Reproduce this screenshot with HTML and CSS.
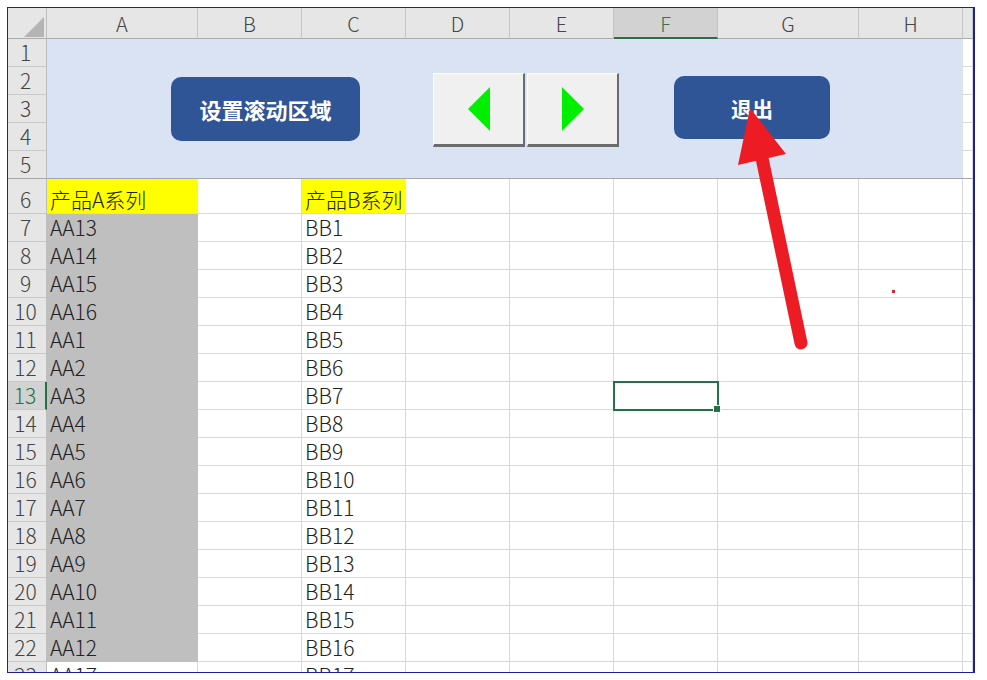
FILE: index.html
```html
<!DOCTYPE html>
<html lang="zh-CN">
<head>
  <meta charset="UTF-8" />
  <title>设置滚动区域</title>
  <link rel="stylesheet" href="styles.css">
</head>
<body>
  <div class="frame">
    <div class="sheet">
      <div class="corner"><span class="tri"></span></div>
      <div class="ch">A</div><div class="ch">B</div><div class="ch">C</div><div class="ch">D</div>
      <div class="ch">E</div><div class="ch on">F</div><div class="ch">G</div><div class="ch">H</div><div class="ch"></div>

      <div class="band">
        <div class="shape blue set">设置滚动区域</div>
        <div class="nav">
          <div class="navbtn">
            <svg width="22" height="44" viewBox="0 0 22 44"><polygon points="0,22 22,0 22,44" fill="#00ee00"/></svg>
          </div>
          <div class="navbtn">
            <svg width="22" height="44" viewBox="0 0 22 44"><polygon points="0,0 22,22 0,44" fill="#00ee00"/></svg>
          </div>
        </div>
        <div class="shape blue exit">退出</div>
      </div>

      <div class="rh">1</div><div class="c"></div>
      <div class="rh">2</div><div class="c"></div>
      <div class="rh">3</div><div class="c"></div>
      <div class="rh">4</div><div class="c"></div>
      <div class="rh last">5</div><div class="c last"></div>

      <div class="rh tall">6</div><div class="c tall y">产品A系列</div><div class="c tall"></div><div class="c tall y">产品B系列</div><div class="c"></div><div class="c"></div><div class="c"></div><div class="c"></div><div class="c"></div><div class="c"></div>
      <div class="rh">7</div><div class="c g">AA13</div><div class="c"></div><div class="c">BB1</div><div class="c"></div><div class="c"></div><div class="c"></div><div class="c"></div><div class="c"></div><div class="c"></div>
      <div class="rh">8</div><div class="c g">AA14</div><div class="c"></div><div class="c">BB2</div><div class="c"></div><div class="c"></div><div class="c"></div><div class="c"></div><div class="c"></div><div class="c"></div>
      <div class="rh">9</div><div class="c g">AA15</div><div class="c"></div><div class="c">BB3</div><div class="c"></div><div class="c"></div><div class="c"></div><div class="c"></div><div class="c"></div><div class="c"></div>
      <div class="rh">10</div><div class="c g">AA16</div><div class="c"></div><div class="c">BB4</div><div class="c"></div><div class="c"></div><div class="c"></div><div class="c"></div><div class="c"></div><div class="c"></div>
      <div class="rh">11</div><div class="c g">AA1</div><div class="c"></div><div class="c">BB5</div><div class="c"></div><div class="c"></div><div class="c"></div><div class="c"></div><div class="c"></div><div class="c"></div>
      <div class="rh">12</div><div class="c g">AA2</div><div class="c"></div><div class="c">BB6</div><div class="c"></div><div class="c"></div><div class="c"></div><div class="c"></div><div class="c"></div><div class="c"></div>
      <div class="rh on">13</div><div class="c g">AA3</div><div class="c"></div><div class="c">BB7</div><div class="c"></div><div class="c"></div><div class="c sel"></div><div class="c"></div><div class="c"></div><div class="c"></div>
      <div class="rh">14</div><div class="c g">AA4</div><div class="c"></div><div class="c">BB8</div><div class="c"></div><div class="c"></div><div class="c"></div><div class="c"></div><div class="c"></div><div class="c"></div>
      <div class="rh">15</div><div class="c g">AA5</div><div class="c"></div><div class="c">BB9</div><div class="c"></div><div class="c"></div><div class="c"></div><div class="c"></div><div class="c"></div><div class="c"></div>
      <div class="rh">16</div><div class="c g">AA6</div><div class="c"></div><div class="c">BB10</div><div class="c"></div><div class="c"></div><div class="c"></div><div class="c"></div><div class="c"></div><div class="c"></div>
      <div class="rh">17</div><div class="c g">AA7</div><div class="c"></div><div class="c">BB11</div><div class="c"></div><div class="c"></div><div class="c"></div><div class="c"></div><div class="c"></div><div class="c"></div>
      <div class="rh">18</div><div class="c g">AA8</div><div class="c"></div><div class="c">BB12</div><div class="c"></div><div class="c"></div><div class="c"></div><div class="c"></div><div class="c"></div><div class="c"></div>
      <div class="rh">19</div><div class="c g">AA9</div><div class="c"></div><div class="c">BB13</div><div class="c"></div><div class="c"></div><div class="c"></div><div class="c"></div><div class="c"></div><div class="c"></div>
      <div class="rh">20</div><div class="c g">AA10</div><div class="c"></div><div class="c">BB14</div><div class="c"></div><div class="c"></div><div class="c"></div><div class="c"></div><div class="c"></div><div class="c"></div>
      <div class="rh">21</div><div class="c g">AA11</div><div class="c"></div><div class="c">BB15</div><div class="c"></div><div class="c"></div><div class="c"></div><div class="c"></div><div class="c"></div><div class="c"></div>
      <div class="rh">22</div><div class="c g">AA12</div><div class="c"></div><div class="c">BB16</div><div class="c"></div><div class="c"></div><div class="c"></div><div class="c"></div><div class="c"></div><div class="c"></div>
      <div class="rh">23</div><div class="c">AA17</div><div class="c"></div><div class="c">BB17</div><div class="c"></div><div class="c"></div><div class="c"></div><div class="c"></div><div class="c"></div><div class="c"></div>
    </div>

    <!-- annotation drawn over the sheet -->
    <svg class="mark" width="966" height="664" viewBox="8 8 966 664">
      <line x1="762" y1="158" x2="801" y2="343" stroke="#ed1c24" stroke-width="13" stroke-linecap="round"/>
      <polygon points="750,108 786,154 738,165" fill="#ed1c24"/>
      <rect x="892" y="290" width="3" height="3" fill="#e0202a"/>
    </svg>
  </div>
</body>
</html>
```

FILE: styles.css
```css
* { box-sizing: border-box; }
html, body {
  margin: 0;
  padding: 0;
  background: #fff;
}
body {
  padding: 7px;
  font-family: "Noto Sans CJK SC", "Noto Sans", sans-serif;
}
.frame {
  position: relative;
  width: 968px;
  height: 666px;
  border: 1px solid #1f1f9c;
  border-right-width: 2px;
  overflow: hidden;
}
.sheet {
  display: grid;
  grid-template-columns: 39px 151px repeat(5, 104px) 141px 104px 1fr;
  grid-template-rows: 31px repeat(5, 28px) 35px repeat(17, 28px);
  font-size: 21px;
  font-weight: 300;
  color: #222;
}
.corner {
  background: #e6e6e6;
  border-right: 1px solid #bdbdbd;
  border-bottom: 1px solid #ababab;
  display: flex;
  justify-content: flex-end;
  align-items: flex-end;
  padding: 0 2px 1px 0;
}
.tri {
  width: 20px;
  height: 20px;
  background: #b4b4b4;
  clip-path: polygon(100% 0, 100% 100%, 0 100%);
}
.ch {
  background: #e6e6e6;
  border-right: 1px solid #c4c4c4;
  border-bottom: 1px solid #ababab;
  color: #444;
  text-align: center;
  font-size: 20px;
  padding-top: 1px;
  line-height: 29px;
}
.ch.on {
  background: #d2d2d2;
  color: #3a6e52;
  border-bottom: 2px solid #217346;
}
.rh {
  background: #e6e6e6;
  border-right: 1px solid #bdbdbd;
  border-bottom: 1px solid #c8c8c8;
  color: #444;
  text-align: center;
  line-height: 27px;
  padding-right: 3px;
}
.rh.tall { padding-top: 7px; }
.rh.last { border-bottom-color: #a6a6a6; }
.rh.on {
  background: #d2d2d2;
  color: #217346;
  border-right: 2px solid #217346;
}
.c {
  border-right: 1px solid #d9d9d9;
  border-bottom: 1px solid #d9d9d9;
  padding-left: 3px;
  line-height: 27px;
  white-space: nowrap;
}
.c.tall { padding-top: 7px; }
.c.last { border-bottom-color: #a6a6a6; }
.c.g { background: #bfbfbf; border-color: #bfbfbf; }
.c.y { background: #ffff00; border-right-color: #ffff00; }
.c.y:first-of-type { border-bottom-color: #ffff00; }
.c.sel {
  position: relative;
  outline: 2px solid #217346;
  outline-offset: -1px;
}
.c.sel::after {
  content: "";
  position: absolute;
  right: -4px;
  bottom: -4px;
  width: 6px;
  height: 6px;
  background: #217346;
  border: 1px solid #fff;
}

/* rows 1-5: shaded panel with the macro buttons */
.band {
  grid-column: 2 / 10;
  grid-row: 2 / 7;
  background: #dae3f3;
  border-bottom: 1px solid #a6a6a6;
  display: flex;
  align-items: flex-start;
}
.shape {
  display: flex;
  align-items: center;
  justify-content: center;
  color: #fff;
  font-weight: bold;
}
.blue {
  background: #2f5597;
  border-radius: 10px;
}
.set {
  margin: 38px 0 0 124px;
  width: 189px;
  height: 64px;
  font-size: 22px;
}
.exit {
  margin: 37px 0 0 55px;
  width: 156px;
  height: 63px;
  font-size: 21px;
}
.nav {
  display: flex;
  gap: 2px;
  margin: 34px 0 0 73px;
}
.navbtn {
  width: 92px;
  height: 74px;
  background: #f0f0f0;
  border-top: 1px solid #fff;
  border-left: 1px solid #fff;
  border-right: 2px solid #6b6b6b;
  border-bottom: 3px solid #6b6b6b;
  display: flex;
  align-items: center;
  justify-content: center;
}
.mark {
  position: absolute;
  left: 0;
  top: 0;
  pointer-events: none;
}
```
